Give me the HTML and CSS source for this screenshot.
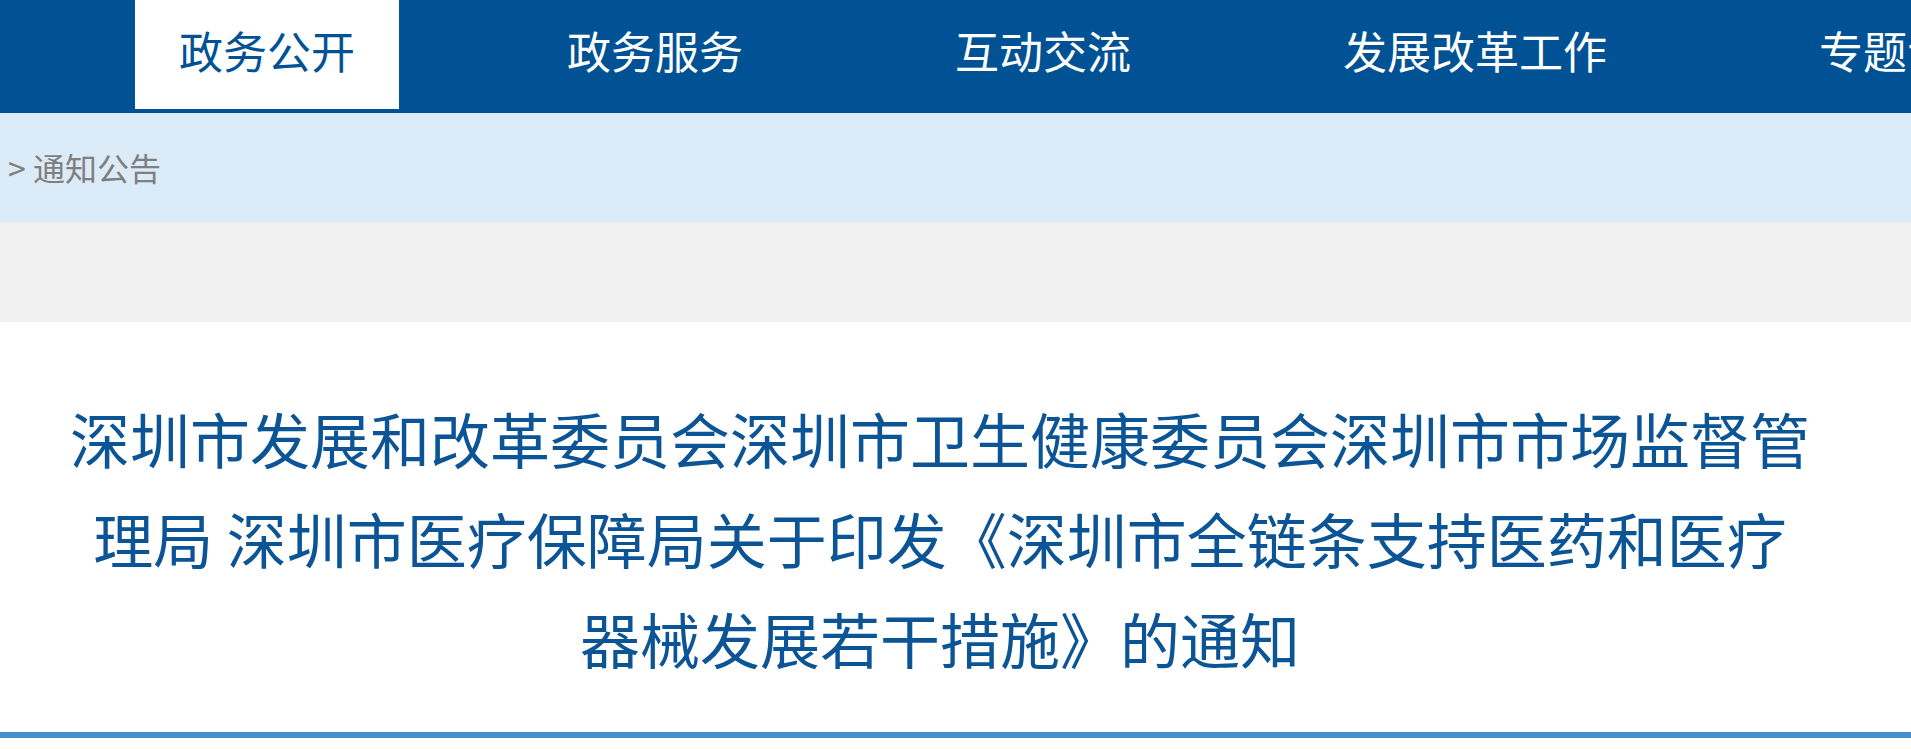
FILE: index.html
```html
<!DOCTYPE html>
<html lang="zh-CN">
<head>
<meta charset="utf-8">
<title>通知公告</title>
<link rel="stylesheet" href="styles.css">
</head>
<body>
<nav class="nav">
  <ul class="nav-list">
    <li class="nav-item active">政务公开</li>
    <li class="nav-item">政务服务</li>
    <li class="nav-item">互动交流</li>
    <li class="nav-item">发展改革工作</li>
    <li class="nav-item">专题专栏</li>
  </ul>
</nav>
<div class="crumb">&gt; 通知公告</div>
<div class="spacer"></div>
<main class="article">
  <h1 class="title">深圳市发展和改革委员会深圳市卫生健康委员会深圳市市场监督管理局 深圳市医疗保障局关于印发《深圳市全链条支持医药和医疗器械发展若干措施》的通知</h1>
</main>
<div class="rule"></div>
</body>
</html>
```

FILE: styles.css
```css
html, body {
  margin: 0;
  padding: 0;
  background: #ffffff;
  font-family: "Noto Sans CJK SC", "Noto Sans", sans-serif;
  overflow: hidden;
}

.nav {
  height: 113px;
  background: #005294;
  overflow: hidden;
}

.nav-list {
  list-style: none;
  margin: 0;
  padding: 0 0 0 135px;
  display: flex;
  gap: 124px;
  white-space: nowrap;
}

.nav-item {
  flex: none;
  height: 109px;
  line-height: 101px;
  padding: 0 44px;
  font-size: 44px;
  color: #ffffff;
}

.nav-item.active {
  background: #ffffff;
  color: #005294;
}

.crumb {
  height: 109px;
  line-height: 109px;
  padding-left: 8px;
  background: #dcebf8;
  color: #7f7f7f;
  font-size: 32px;
}

.spacer {
  height: 100px;
  background: #f0f0f0;
}

.article {
  padding: 66px 98px 0 67px;
}

.title {
  margin: 0;
  font-size: 60px;
  font-weight: normal;
  line-height: 100px;
  text-align: center;
  color: #0b5496;
}

.rule {
  margin-top: 44px;
  height: 6px;
  background: #468fcc;
}
```
